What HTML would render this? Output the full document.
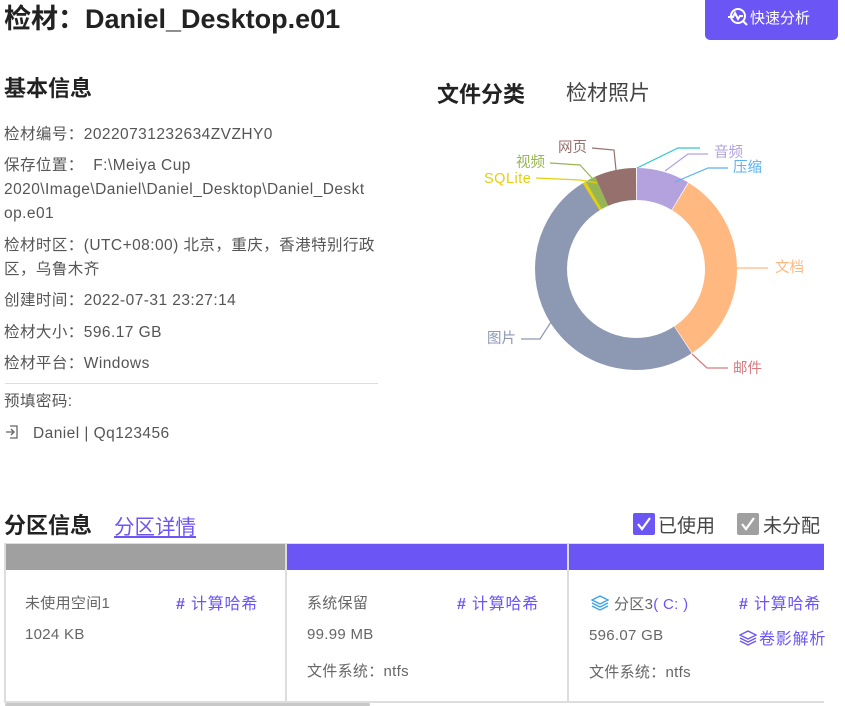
<!DOCTYPE html>
<html><head><meta charset="utf-8"><style>
*{margin:0;padding:0;box-sizing:border-box}
body{width:845px;height:706px;overflow:hidden;background:#fff;font-family:"Liberation Sans","Noto Sans CJK SC",sans-serif;color:#333;position:relative}
.a{position:absolute;white-space:nowrap}
.t{font-size:15.5px;color:#555;line-height:24px;letter-spacing:0.45px}
.h{font-weight:bold;font-size:22px;color:#222}
.card{position:absolute;top:543px;height:160px;border:2px solid #ddd;border-top:1px solid #ddd;background:#fff}
.bar{height:26px}
.c{position:absolute;font-size:15px;color:#666;white-space:nowrap;letter-spacing:0.3px}
.p{color:#6c55f5}
.q{font-size:16px;letter-spacing:0.8px}
.cb{position:absolute;width:22px;height:22px;border-radius:2px}
</style></head><body>
<div class="a" style="left:4px;top:-3px;font-size:27px;font-weight:bold;color:#222">检材：Daniel_Desktop.e01</div>
<div class="a" style="left:705px;top:0;width:133px;height:40px;background:#6c55f5;border-radius:0 0 5px 5px;color:#fff;font-size:15px;line-height:38px;padding-left:22px">
<svg width="22" height="20" viewBox="0 0 22 20" style="vertical-align:-4px;margin-right:1px"><circle cx="11" cy="9" r="7" fill="none" stroke="#fff" stroke-width="2"/><path d="M1 10h5l2-4 3 6 2-3h3M16 14l4 4" fill="none" stroke="#fff" stroke-width="2"/></svg>快速分析</div>
<div class="a h" style="left:4px;top:71px">基本信息</div>
<div class="a t" style="left:4px;top:123px">检材编号：20220731232634ZVZHY0</div>
<div class="a t" style="left:4px;top:154px;white-space:normal;width:380px">保存位置：&nbsp; F:\Meiya Cup<br>2020\Image\Daniel\Daniel_Desktop\Daniel_Deskt<br>op.e01</div>
<div class="a t" style="left:4px;top:234px;white-space:normal;width:380px">检材时区：(UTC+08:00) 北京，重庆，香港特别行政<br>区，乌鲁木齐</div>
<div class="a t" style="left:4px;top:289px">创建时间：2022-07-31 23:27:14</div>
<div class="a t" style="left:4px;top:321px">检材大小：596.17 GB</div>
<div class="a t" style="left:4px;top:352px">检材平台：Windows</div>
<div class="a" style="left:5px;top:383px;width:373px;height:1px;background:#ddd"></div>
<div class="a t" style="left:4px;top:390px">预填密码:</div>
<div class="a t" style="left:4px;top:422px"><svg width="16" height="16" viewBox="0 0 16 16" style="vertical-align:-2px;margin-right:13px"><path d="M2 8h8M7 5l3 3-3 3M6 2h7v12H6" fill="none" stroke="#666" stroke-width="1.3"/></svg>Daniel | Qq123456</div>
<div class="a h" style="left:437px;top:77px">文件分类</div>
<div class="a" style="left:566px;top:77px;font-size:21px;color:#444">检材照片</div>
<svg class="a" style="left:0;top:0" width="845" height="400">
<g transform="rotate(-90 636 269)" fill="none" stroke-width="32">
<circle cx="636" cy="269" r="85" stroke="#b3a2dd" stroke-dasharray="45.2 600" stroke-dashoffset="-0.8"/>
<circle cx="636" cy="269" r="85" stroke="#ffb980" stroke-dasharray="170 600" stroke-dashoffset="-46.7"/>
<circle cx="636" cy="269" r="85" stroke="#8d98b3" stroke-dasharray="269.6 600" stroke-dashoffset="-217.3"/>
<circle cx="636" cy="269" r="85" stroke="#e5cf0d" stroke-dasharray="2.9 600" stroke-dashoffset="-486.6"/>
<circle cx="636" cy="269" r="85" stroke="#97b552" stroke-dasharray="8.9 600" stroke-dashoffset="-489.5"/>
<circle cx="636" cy="269" r="85" stroke="#95706d" stroke-dasharray="35.6 600" stroke-dashoffset="-498.4"/>
</g>
<g fill="none" stroke-width="1.2">
<polyline points="592,148 614,150 616,170" stroke="#95706d"/>
<polyline points="550,163 580,165 592,178" stroke="#97b552"/>
<polyline points="536,178 580,180 597,183" stroke="#e5cf0d"/>
<polyline points="700,148 678,148 637,168" stroke="#2ec7c9"/>
<polyline points="708,154 688,154 665,171" stroke="#b3a2dd"/>
<polyline points="728,168 708,168 675,182" stroke="#5ab1ef"/>
<polyline points="737,268 768,268" stroke="#ffb980"/>
<polyline points="692,354 707,368 728,368" stroke="#d87a80"/>
<polyline points="521,339 540,339 551,322" stroke="#8d98b3"/>
</g>
<g font-size="14.5" font-family="Liberation Sans,Noto Sans CJK SC,sans-serif">
<text x="558" y="152" fill="#95706d">网页</text>
<text x="516" y="167" fill="#97b552">视频</text>
<text x="484" y="183" fill="#e5cf0d" letter-spacing="0.5">SQLite</text>
<text x="714" y="157" fill="#b3a2dd">音频</text>
<text x="733" y="172" fill="#5ab1ef">压缩</text>
<text x="775" y="272" fill="#ffb980">文档</text>
<text x="733" y="373" fill="#d87a80">邮件</text>
<text x="487" y="343" fill="#8d98b3">图片</text>
</g></svg>
<div class="a h" style="left:4px;top:508px">分区信息</div>
<div class="a p" style="left:114px;top:510px;font-size:20.5px;text-decoration:underline">分区详情</div>
<div class="cb" style="left:633px;top:513px;background:#6c55f5"><svg width="22" height="22"><path d="M5 11l4 5 8-11" fill="none" stroke="#fff" stroke-width="2.2"/></svg></div>
<div class="a" style="left:658px;top:511px;font-size:19px;color:#444">已使用</div>
<div class="cb" style="left:737px;top:513px;background:#a0a0a0"><svg width="22" height="22"><path d="M5 11l4 5 8-11" fill="none" stroke="#fff" stroke-width="2.2"/></svg></div>
<div class="a" style="left:763px;top:511px;font-size:19px;color:#444">未分配</div>
<div class="card" style="left:4px;width:283px"><div class="bar" style="background:#a0a0a0"></div>
<div class="c" style="left:19px;top:48px">未使用空间1</div>
<div class="c p q" style="left:170px;top:46px"><b>#</b> 计算哈希</div>
<div class="c" style="left:19px;top:82px">1024 KB</div></div>
<div class="card" style="left:285px;width:284px"><div class="bar" style="background:#6c55f5"></div>
<div class="c" style="left:20px;top:48px">系统保留</div>
<div class="c p q" style="left:170px;top:46px"><b>#</b> 计算哈希</div>
<div class="c" style="left:20px;top:82px">99.99 MB</div>
<div class="c" style="left:20px;top:116px">文件系统：ntfs</div></div>
<div class="card" style="left:567px;width:257px;border-right:none"><div class="bar" style="background:#6c55f5"></div>
<div class="c" style="left:22px;top:49px"><svg width="18" height="16" viewBox="0 0 18 16" style="vertical-align:-2px;margin-right:5px"><path d="M9 1l8 4-8 4-8-4z M1 8l8 4 8-4 M1 11l8 4 8-4" fill="none" stroke="#3aa0f0" stroke-width="1.3"/></svg>分区3<span style="color:#6c55f5">( C: )</span></div>
<div class="c p q" style="left:170px;top:46px"><b>#</b> 计算哈希</div>
<div class="c" style="left:20px;top:83px">596.07 GB</div>
<div class="c p q" style="left:170px;top:81px"><svg width="18" height="16" viewBox="0 0 18 16" style="vertical-align:-2px;margin-right:2px"><path d="M9 1l8 4-8 4-8-4z M1 8l8 4 8-4 M1 11l8 4 8-4" fill="none" stroke="#6c55f5" stroke-width="1.3"/></svg>卷影解析</div>
<div class="c" style="left:20px;top:117px">文件系统：ntfs</div></div>
<div class="a" style="left:5px;top:703px;width:365px;height:3px;background:#c8c8c8;border-radius:2px"></div>
</body></html>
